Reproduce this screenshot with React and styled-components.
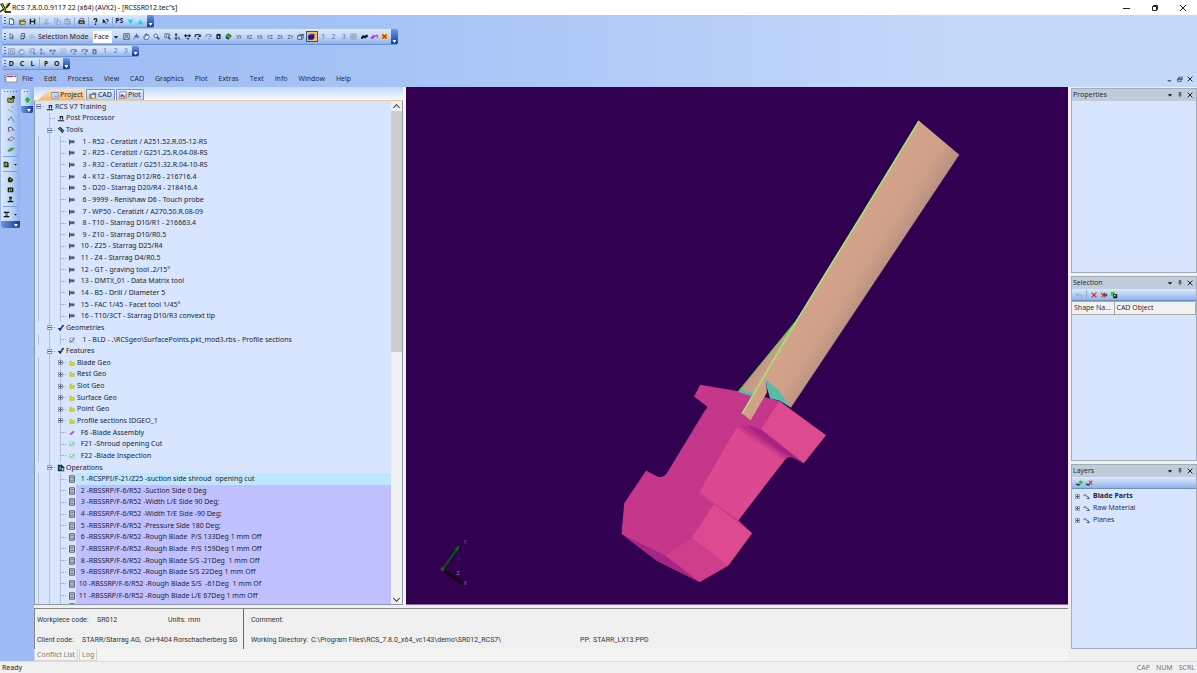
import React, { useState } from "react";
import styled, { createGlobalStyle, css } from "styled-components";

const GlobalStyle = createGlobalStyle`
  * {
    box-sizing: border-box;
  }
  body {
    margin: 0;
    background: #f0f0f0;
    color: #1c2430;
    font-family: "Noto Sans", "Open Sans", sans-serif;
    font-size: 7px;
    line-height: 10px;
  }
  button, select {
    font: inherit;
    color: inherit;
    border: 0;
    padding: 0;
    margin: 0;
    background: none;
  }
  ul {
    list-style: none;
    margin: 0;
    padding: 0;
  }
  svg {
    display: block;
  }
`;

// small 10x10 toolbar drawings
const glyphs = {
  blank: <path d="M2 1h4l2 2v6H2zM6 1v2h2" fill="#fff" stroke="#333" />,
  open: <g><path d="M1 3h3l1 1h3v4H1z" fill="#c9b52a" stroke="#4b4308" /><path d="M3 5h7L8 9H1z" fill="#f1e16a" stroke="#4b4308" /><path d="M6 2q2-1 3 1" stroke="#222" fill="none" /></g>,
  save: <g><path d="M1 1h8v8H1z" fill="#18202c" /><path d="M3 1h4v3H3zM3 6h4v3H3z" fill="#dbe6f5" /></g>,
  cut: <g stroke="#7d96bd" fill="none"><path d="M3 1l3 6M7 1L4 7" /><circle cx="3" cy="8" r="1" /><circle cx="7" cy="8" r="1" /></g>,
  copy: <g stroke="#7d96bd" fill="#c6d8f2"><path d="M1 1h4v5H1zM4 4h5v5H4z" /></g>,
  paste: <g stroke="#7d96bd" fill="#c6d8f2"><path d="M1 2h7v6H1zM3 1h3v2H3zM4 5h5v4H4z" /></g>,
  print: <g><path d="M3 1h5L7 4H2z" fill="#fff" stroke="#333" /><path d="M1 4h8v4H1z" fill="#555" stroke="#222" /><path d="M3 6h4" stroke="#eee" /></g>,
  help: <g><path d="M3 3q0-2 2-2t2 2q0 1-2 3" stroke="#252000" strokeWidth="2" fill="none" /><path d="M4 8h2v2H4z" fill="#252000" /><path d="M4 3q1-2 2 0" stroke="#e8d400" fill="none" /></g>,
  whats: <g><path d="M1 1v7l2-2 2 3V5z" fill="#14223c" /><path d="M6 3q0-2 2-1t-1 4M7 8v1" stroke="#1c3e83" strokeWidth="1.5" fill="none" /></g>,
  down: <path d="M1 2h8L5 9z" fill="#12dbe6" />,
  up: <path d="M1 9h8L5 2z" fill="#12dbe6" />,
  cursor: <path d="M3 1v7l2-2 1 3 1-1-1-3h2z" fill="#fff" stroke="#2a3444" />,
  cursor2: <g><path d="M3 3v6l2-2 1 2 1-3h2z" fill="#fff" stroke="#222" /><path d="M3 1h5v3" fill="none" stroke="#222" /></g>,
  cursorOff: <path d="M4 2v6l2-2h3zM1 2v6" fill="#c5d7f2" stroke="#8aa0c4" />,
  view: <g><path d="M1 1h8v8H1z" fill="#c9dcf6" stroke="#28384f" /><circle cx="5" cy="4" r="1.5" fill="none" stroke="#28384f" /><path d="M2 8l2-2M6 6l2 2" stroke="#28384f" /></g>,
  walk: <path d="M1 9l3-4 1-4 1 4 3 1M4 5l3 2M2 5l6-1" stroke="#2d4874" fill="none" />,
  hand: <path d="M2 9L1 5l2 1V2l1 2 1-3 1 3 1-2 1 2 1 1-2 4z" fill="#e9f1fc" stroke="#35445b" />,
  zoom: <g><circle cx="4" cy="4" r="2.5" fill="#eaf3ff" stroke="#293d60" /><path d="M6 6l3 3" stroke="#293d60" strokeWidth="2" /></g>,
  zoomBox: <g><path d="M1 1h7v4M1 1v6h3" fill="none" stroke="#293d60" strokeWidth=".7" /><circle cx="5" cy="4" r="2" fill="#eaf3ff" stroke="#293d60" /><path d="M6 6l3 3" stroke="#293d60" strokeWidth="2" /></g>,
  moveV: <g stroke="#141c28" fill="none"><path d="M3 1v8M1 3l2-2 2 2M1 7l2 2 2-2" strokeWidth="1.3" /><path d="M6 8l3 1M6 6h2" /></g>,
  moveH: <path d="M1 4h8M3 2L1 4l2 2M7 2l2 2-2 2M4 7l3 2" stroke="#141c28" fill="none" strokeWidth="1.5" />,
  orbit: <g><path d="M2 6q-2-4 3-4t3 3M6 5h3V2" stroke="#141c28" fill="none" strokeWidth="1.5" /><path d="M5 7l2 2" stroke="#141c28" strokeWidth="1.5" /></g>,
  orbitOff: <path d="M2 6q-2-4 3-4t3 3M6 5h3V2M5 7l2 2" stroke="#6e8bb8" fill="none" strokeWidth="1.5" />,
  cyl: <g><path d="M2 2q3-2 6 0v6q-3 2-6 0z" fill="#15191f" /><path d="M4 4h2v3H4z" fill="#cfdcec" /></g>,
  green: <g><path d="M2 3l3-2 4 3-3 4-4-1z" fill="#2cab3c" stroke="#0f4b18" /><path d="M1 6l4 3" stroke="#222" strokeWidth="1.5" /></g>,
  box: <g fill="#dbe8fa" stroke="#27364c"><path d="M1 4h6v5H1z" /><path d="M1 4l2-2h6L7 4zM7 4l2-2v5L7 9z" /></g>,
  solid: <g><path d="M1 4h6v5H1z" fill="#0717e8" stroke="#050a50" /><path d="M1 4l2-2h6L7 4z" fill="#3aa13c" stroke="#050a50" /><path d="M7 4l2-2v5L7 9z" fill="#050a50" /></g>,
  grid: <path d="M1 1h8v8H1zM1 4h8M1 6h8M4 1v8M6 1v8" fill="none" stroke="#8b9dba" />,
  wave: <path d="M0 8l3-4 2 1 4-2M1 8l3-2 2 1 4-3" stroke="#101216" strokeWidth="1.7" fill="none" />,
  wavePink: <path d="M0 8l3-4 2 1 3-2 2 4M1 8l3-2" stroke="#d321d0" strokeWidth="1.7" fill="none" />,
  redX: <g><path d="M0 1h10v8H0z" fill="#f3d341" /><path d="M2 2l6 6M8 2L2 8" stroke="#e31b12" strokeWidth="2" /></g>,
  pts: <g><path d="M2 6l5 3" stroke="#8b9dba" /><path d="M1 5h2v2H1z" fill="#e2bc2c" /><path d="M6 2h1v1H6z" fill="#1976e4" /></g>,
  line: <g><path d="M2 6l3-4 4 7" fill="none" stroke="#5c6f8f" /><path d="M1 5h2v2H1z" fill="#2ca63a" /></g>,
  lineRed: <g><path d="M2 7V3h4l3 4" fill="none" stroke="#2e3d57" /><path d="M1 7h3v1H1z" fill="#d92929" /><path d="M6 5h2v2H6z" fill="#37a643" /></g>,
  ringRed: <g><path d="M2 5l4-3 3 2-4 4z" fill="none" stroke="#7a5f93" /><path d="M1 5h2v2H1z" fill="#e0242f" /></g>,
  leaf: <path d="M1 8l3-4h5L6 7z" fill="#25b53a" stroke="#146b20" strokeWidth=".6" />,
  block: <g><path d="M1 1h5l2 2v6H1z" fill="#13171d" /><path d="M2 3h2v5H2z" fill="#47b53f" /><path d="M4 2h2v5H4z" fill="#b8a72c" /></g>,
  imp: <g><path d="M1 4h7v5H1z" fill="#b9b13a" stroke="#1c2415" /><path d="M4 6l5-4M6 2h3v3" stroke="#12180f" fill="none" strokeWidth="1.3" /></g>,
  star: <g><path d="M4 1l2 2 3 2-2 4H2L1 4z" fill="#1d2713" /><path d="M4 4h2v2H4z" fill="#95bb45" /></g>,
  cube: <g><path d="M1 2h8v7H1z" fill="#161b12" /><path d="M3 4h2v4H3z" fill="#7fc04f" /><path d="M6 4h1v3H6z" fill="#ddd" /></g>,
  press: <g><path d="M3 1h4v3H3zM1 7h8v2H1z" fill="#101418" /><path d="M3 4h4v3H3z" fill="#3d8a55" /></g>,
  press2: <g><path d="M1 1h8v2H1zM1 7h8v2H1z" fill="#101418" /><path d="M3 3h4v4H3z" fill="#7a8d25" /></g>,
  plus: <g><path d="M5 1l4 4-4 4-4-4z" fill="#1cb92a" /><path d="M3 8h4v1H3z" fill="#0c5e15" /></g>,
  doc: <g><path d="M1 2h8v7H1z" fill="#fff" stroke="#5a7fb9" /><path d="M1 2h8M3 5h5M3 7h5" stroke="#5a7fb9" /></g>,
  cad: <g><path d="M1 4h7v5H1z" fill="#d7b645" stroke="#6b5b28" /><path d="M4 2h5v3H4z" fill="#5f80b5" /><path d="M4 5h3v4H4z" fill="#f4f7fb" /></g>,
  plot: <g><path d="M1 1h8v8H1z" fill="#f4f7ff" stroke="#4a75c4" /><path d="M2 7l2-2 3 3" stroke="#e02a1b" strokeWidth="2" fill="none" /><path d="M5 6l4-2v4z" fill="#efb51e" /></g>,
  machine: <path d="M4 7V3h3v4M1 8.500h8" stroke="#15191f" strokeWidth="1.3" fill="#c4cee0" />,
  bolt: <g><path d="M1 3l3-2 5 5-2 3z" fill="#10151c" /><path d="M2 3l2-1 2 3-2 1z" fill="#2f93b7" /><path d="M6 6l2 1" stroke="#fff" /></g>,
  tool: <g><path d="M1 1v8" stroke="#262c36" strokeWidth="1.6" /><path d="M2 3h7v4H2z" fill="#6d7787" /><path d="M2 3h7M2 5h7" stroke="#262c36" strokeWidth=".9" /></g>,
  check: <g><path d="M1 5l3 4 5-7-2-1-3 4z" fill="#12223e" /><path d="M4 6l3-4 1 1-3 4z" fill="#3b77c8" /></g>,
  geo: <g><path d="M1 2h7v7H1z" fill="#e5edf8" stroke="#5a6478" strokeWidth=".7" /><path d="M2 5l2 3 5-7" stroke="#1a1f29" fill="none" /></g>,
  folder: <path d="M1 2h3l1 2h4v5H1z" fill="#d8d619" stroke="#a3a530" strokeWidth=".6" />,
  feat: <path d="M1 7l3 1 5-5-3-1z" fill="#f02ae2" stroke="#8a4c9a" strokeWidth=".6" />,
  featOk: <g><path d="M1 2h7v6H1z" fill="#e8f4ea" stroke="#8ba29b" strokeWidth=".8" /><path d="M2 5l2 2 5-5" stroke="#1fc23c" strokeWidth="1.3" fill="none" /></g>,
  ops: <g><path d="M1 1h5l3 3v5H1z" fill="#1a2f42" /><path d="M3 3h2v4H3z" fill="#45b9c4" /><path d="M6 5h2v3H6z" fill="#dce" /></g>,
  op: <g><path d="M2 1h6v8H2z" fill="#e6ebf4" stroke="#2d323b" /><path d="M3 3h4M3 5h4M3 7h4" stroke="#2d323b" strokeWidth=".8" /></g>,
  undo: <path d="M2 3v3h3M2 6q3-4 6-1v3" stroke="#8aa2c8" fill="none" />,
  del: <path d="M2 2l6 6M8 2L2 8" stroke="#ee2222" strokeWidth="1.6" />,
  delAll: <g><path d="M1 2l5 6M6 2L2 8" stroke="#e03a1e" strokeWidth="1.3" /><path d="M4 4h5M5 6h4" stroke="#25331c" strokeWidth="1.3" /></g>,
  addSel: <g><path d="M1 1h5v5H1z" fill="#2fd334" /><path d="M4 4h5v5H4z" fill="#111" /><path d="M5 5h2v2H5z" fill="#dfe9df" /></g>,
  layerAdd: <g><path d="M0 6h6v2H3z" fill="#26313f" /><path d="M5 4h5M7 2v5" stroke="#29c033" strokeWidth="2" /></g>,
  layerDel: <g><path d="M0 6h6v2H3z" fill="#26313f" /><path d="M5 2l4 5M9 2L5 7" stroke="#e33a2e" strokeWidth="1.6" /></g>,
  layer: <g><path d="M1 3h4l4 4H5z" fill="#fff" stroke="#6a7488" strokeWidth=".6" /><path d="M1 3h4M5 5h2l2 3H5" stroke="#2b3240" fill="none" /></g>,
  caret: <path d="M2 4h6L5 7z" fill="#111" />,
  pin: <path d="M3 1h4M4 1v4M6 1v4M2 5h6M5 5v4" stroke="#222" fill="none" />,
  close: <path d="M1 1l8 8M9 1L1 9" stroke="#15181d" strokeWidth="1.5" />,
  min: <path d="M1 8h6" stroke="#15181d" strokeWidth="1.5" />,
  restore: <path d="M1 5h6v4H1zM3 5V2h6v4H7M1 5h6" stroke="#15181d" fill="none" />,
};

const smallGlyphs = ["tool", "feat", "featOk", "geo", "folder"];

const Glyph = ({ name, size = 8 }) => (
  <svg width={size} height={size} viewBox="0 0 10 10" aria-hidden="true">
    {glyphs[name]}
  </svg>
);

const App = () => {
  const [tab, setTab] = useState("Project");
  const [mode, setMode] = useState("Face");

  return (
    <>
      <GlobalStyle />
      <Shell>
        <TitleBar>
          <Logo />
          <Title>RCS 7.8.0.0.9117 22 (x64) (AVX2) - [RCSSR012.tec"s]</Title>
          <WindowButton aria-label="Minimize"><svg width="8" height="8"><path d="M0 4.500h7" stroke="#222" /></svg></WindowButton>
          <WindowButton aria-label="Restore"><svg width="8" height="8"><path d="M1.500 2.500h4v4h-4zM2.500 2.500v-1h4v4h-1" fill="none" stroke="#222" /></svg></WindowButton>
          <WindowButton aria-label="Close"><svg width="8" height="8"><path d="M1 1l6 6M7 1L1 7" stroke="#222" /></svg></WindowButton>
        </TitleBar>

        <Bars>
          <Toolbar $width={154} $height={13}>
            <Grip />
            <Tools items={["blank", "open", "save", "|", "cut", "copy", "paste", "|", "print", "|", "help", "whats", "|", "#PS", "down", "up"]} />
            <Overflow />
          </Toolbar>
          <Toolbar $width={398} $height={16}>
            <Grip />
            <Fixed $width={32}><Tools items={["cursor", "cursor2", "cursorOff"]} /></Fixed>
            <ModeLabel htmlFor="mode">Selection Mode</ModeLabel>
            <ModeBox>
              <ModeSelect id="mode" value={mode} onChange={(e) => setMode(e.target.value)}>
                <option>Face</option>
                <option>Edge</option>
              </ModeSelect>
              <Glyph name="caret" />
            </ModeBox>
            <Tools items={["view", "walk", "hand", "zoom", "zoomBox", "moveV", "moveH", "orbit", "orbitOff", "cyl", "green", "~XY", "~XZ", "~YX", "~YZ", "~ZX", "~ZY", "box", "*solid", "-1", "-2", "-3", "grid", "wave", "wavePink", "redX"]} />
            <Overflow />
          </Toolbar>
          <Toolbar $width={139} $height={11} $muted>
            <Grip />
            <Tools items={["view", "hand", "zoomBox", "moveV", "moveH", "grid", "orbit", "orbit", "cyl", "-1", "-2", "-3"]} />
            <Overflow />
          </Toolbar>
          <Toolbar $width={70} $height={12}>
            <Grip />
            <Tools items={["#D", "#C", "#L", "|", "#P", "#O"]} />
            <Overflow />
          </Toolbar>
          <MenuBar>
            <MenuIcon width="14" height="10">
              <path d="M0.500 1v8" stroke="#5f86cf" strokeDasharray="1 1" />
              <path d="M2 1h11v7H2z" fill="#fff" stroke="#8c8fa0" />
              <path d="M3 2h6v1H3z" fill="#d7263a" />
              <path d="M10 2h2v1h-2z" fill="#4a62b8" />
            </MenuIcon>
            {["File", "Edit", "Process", "View", "CAD", "Graphics", "Plot", "Extras", "Text", "Info", "Window", "Help"].map((m) => (
              <MenuItem key={m}>{m}</MenuItem>
            ))}
            <MenuEnd>
              <IconButton aria-label="Minimize document"><Glyph name="min" size={6} /></IconButton>
              <IconButton aria-label="Restore document"><Glyph name="restore" size={6} /></IconButton>
              <IconButton aria-label="Close document"><Glyph name="close" size={6} /></IconButton>
            </MenuEnd>
          </MenuBar>
        </Bars>

        <Body>
          <SideBars>
            <SideBar $width={19}>
              <TopGrip />
              <SideTool aria-label="Import"><Glyph name="imp" /></SideTool>
              <SideTool aria-label="Points"><Glyph name="pts" /></SideTool>
              <SideTool aria-label="Line"><Glyph name="line" /></SideTool>
              <SideTool aria-label="Polyline"><Glyph name="lineRed" /></SideTool>
              <SideTool aria-label="Contour"><Glyph name="ringRed" /></SideTool>
              <SideTool aria-label="Surface"><Glyph name="leaf" /></SideTool>
              <SideRule />
              <SideTool aria-label="Block"><Glyph name="block" size={7} /><Glyph name="caret" size={5} /></SideTool>
              <SideRule />
              <SideTool aria-label="Burst"><Glyph name="star" size={7} /></SideTool>
              <SideTool aria-label="Cube"><Glyph name="cube" size={7} /></SideTool>
              <SideTool aria-label="Press"><Glyph name="press" size={7} /></SideTool>
              <SideRule />
              <SideTool aria-label="Machine"><Glyph name="press2" size={7} /><Glyph name="caret" size={5} /></SideTool>
              <SideOverflow />
            </SideBar>
            <SideBar $width={12}>
              <TopGrip />
              <SideTool aria-label="Add"><Glyph name="plus" size={7} /></SideTool>
              <SideOverflow />
            </SideBar>
          </SideBars>

          <Center>
            <Work>
              <Project>
                <Tabs>
                  {[["Project", "doc"], ["CAD", "cad"], ["Plot", "plot"]].map(([label, icon]) => (
                    <Tab key={label} $active={tab === label} onClick={() => setTab(label)}>
                      <Glyph name={icon} />
                      {label}
                    </Tab>
                  ))}
                </Tabs>
                <TreeBox>
                  <Tree />
                  <ScrollBar>
                    <Arrow $up />
                    <Thumb />
                    <Arrow />
                  </ScrollBar>
                </TreeBox>
              </Project>
              <Viewport><Model /></Viewport>
            </Work>
            <InfoPane>
              <InfoBlock $columns="45px 15px 71px 20px 1fr" $width={209}>
                <span>Workpiece code:</span><i /><span>SR012</span><span>Units:</span><span>mm</span>
                <span>Client code:</span><Span4>STARR/Starrag AG,  CH-9404 Rorschacherberg SG</Span4>
              </InfoBlock>
              <InfoBlock $columns="60px 269px 13px 1fr">
                <span>Comment:</span><i /><i /><i />
                <span>Working Directory:</span><span>C:\Program Files\RCS_7.8.0_x64_vc143\demo\SR012_RCS7\</span><span>PP:</span><span>STARR_LX13.PPD</span>
              </InfoBlock>
            </InfoPane>
            <BottomTabs>
              <BottomTab>Conflict List</BottomTab>
              <BottomTab>Log</BottomTab>
            </BottomTabs>
          </Center>

          <Dock>
            <Panel>
              <PanelHead title="Properties" />
            </Panel>
            <Panel>
              <PanelHead title="Selection" />
              <PanelTools>
                <Glyph name="undo" /><Rule /><Glyph name="del" /><Glyph name="delAll" /><Glyph name="addSel" />
              </PanelTools>
              <ObjectTable>
                <thead>
                  <tr><th>Shape Na...</th><th>CAD Object</th></tr>
                </thead>
              </ObjectTable>
            </Panel>
            <Panel>
              <PanelHead title="Layers" />
              <PanelTools>
                <Glyph name="layerAdd" /><Glyph name="layerDel" />
              </PanelTools>
              <LayerList>
                {["Blade Parts", "Raw Material", "Planes"].map((name, i) => (
                  <LayerRow key={name} $bold={i === 0}>
                    <Expander />
                    <Glyph name="layer" size={7} />
                    {name}
                  </LayerRow>
                ))}
              </LayerList>
            </Panel>
          </Dock>
        </Body>

        <StatusBar>
          <Ready>Ready</Ready>
          <StatusKey>CAP</StatusKey>
          <StatusKey>NUM</StatusKey>
          <StatusKey>SCRL</StatusKey>
        </StatusBar>
      </Shell>
    </>
  );
};

export default App;

// "|" is a separator, "#" bold letters, "~" axis names, "-" digits, "*" a pressed button
const Tools = ({ items }) =>
  items.map((item, i) => {
    const rest = item.slice(1);
    if (item === "|") return <Rule key={i} />;
    if (item[0] === "#") return <ToolButton key={i} $bold>{rest}</ToolButton>;
    if (item[0] === "~") return <ToolButton key={i} $tiny>{rest}</ToolButton>;
    if (item[0] === "-") return <ToolButton key={i} $digit>{rest}</ToolButton>;
    if (item[0] === "*") return <ToolButton key={i} $pressed aria-label={rest}><Glyph name={rest} size={7} /></ToolButton>;
    return <ToolButton key={i} aria-label={item}><Glyph name={item} size={7} /></ToolButton>;
  });

const Logo = () => (
  <svg width="11" height="12" viewBox="0 0 11 12" aria-hidden="true">
    <path d="M0 2l3-1 3 6v4H5L3 7z" fill="#2a3016" />
    <path d="M2 2l3 7M7 1l3 2-4 4z" stroke="#b5c032" fill="#c6cb3e" />
    <path d="M10 1L6 6M0 10l4-3" stroke="#171a12" strokeWidth="1.500" />
    <path d="M6 10h5" stroke="#3c4a1b" strokeWidth="2" />
  </svg>
);

const PanelHead = ({ title }) => (
  <Head>
    <HeadTitle>{title}</HeadTitle>
    <IconButton aria-label={`${title} menu`}><Glyph name="caret" /></IconButton>
    <IconButton aria-label={`Pin ${title}`}><Glyph name="pin" size={6} /></IconButton>
    <IconButton aria-label={`Close ${title}`}><Glyph name="close" size={6} /></IconButton>
  </Head>
);

const treeRows = [
  [0, "machine", "RCS V7 Training", "-"],
  [1, "machine", "Post Processor"],
  [1, "bolt", "Tools", "-"],
  [2, "tool", "   1 - R52 - Ceratizit / A251.52.R.05-12-RS"],
  [2, "tool", "   2 - R25 - Ceratizit / G251.25.R.04-08-RS"],
  [2, "tool", "   3 - R32 - Ceratizit / G251.32.R.04-10-RS"],
  [2, "tool", "   4 - K12 - Starrag D12/R6 - 216716.4"],
  [2, "tool", "   5 - D20 - Starrag D20/R4 - 218416.4"],
  [2, "tool", "   6 - 9999 - Renishaw D6 - Touch probe"],
  [2, "tool", "   7 - WP50 - Ceratizit / A270.50.R.08-09"],
  [2, "tool", "   8 - T10 - Starrag D10/R1 - 216663.4"],
  [2, "tool", "   9 - Z10 - Starrag D10/R0.5"],
  [2, "tool", "  10 - Z25 - Starrag D25/R4"],
  [2, "tool", "  11 - Z4 - Starrag D4/R0.5"],
  [2, "tool", "  12 - GT - graving tool .2/15°"],
  [2, "tool", "  13 - DMTX_01 - Data Matrix tool"],
  [2, "tool", "  14 - B5 - Drill / Diameter 5"],
  [2, "tool", "  15 - FAC 1/45 - Facet tool 1/45°"],
  [2, "tool", "  16 - T10/3CT - Starrag D10/R3 convext tip"],
  [1, "check", "Geometries", "-"],
  [2, "geo", "   1 - BLD - .\\RCSgeo\\SurfacePoints.pkt_mod3.rbs - Profile sections"],
  [1, "check", "Features", "-"],
  [2, "folder", "Blade Geo", "+"],
  [2, "folder", "Rest Geo", "+"],
  [2, "folder", "Slot Geo", "+"],
  [2, "folder", "Surface Geo", "+"],
  [2, "folder", "Point Geo", "+"],
  [2, "folder", "Profile sections IDGEO_1", "+"],
  [2, "feat", "  F6 -Blade Assembly"],
  [2, "featOk", "  F21 -Shroud opening Cut"],
  [2, "featOk", "  F22 -Blade Inspection"],
  [1, "ops", "Operations", "-"],
  [2, "op", "  1 -RCSPPI/F-21/Z25 -suction side shroud  opening cut", "", "#bee6ff"],
  [2, "op", "  2 -RBSSRP/F-6/R52 -Suction Side 0 Deg", "", "#c1c0fe"],
  [2, "op", "  3 -RBSSRP/F-6/R52 -Width L/E Side 90 Deg;", "", "#c1c0fe"],
  [2, "op", "  4 -RBSSRP/F-6/R52 -Width T/E Side -90 Deg;", "", "#c1c0fe"],
  [2, "op", "  5 -RBSSRP/F-6/R52 -Pressure Side 180 Deg;", "", "#c1c0fe"],
  [2, "op", "  6 -RBSSRP/F-6/R52 -Rough Blade  P/S 133Deg 1 mm Off", "", "#c1c0fe"],
  [2, "op", "  7 -RBSSRP/F-6/R52 -Rough Blade  P/S 159Deg 1 mm Off", "", "#c1c0fe"],
  [2, "op", "  8 -RBSSRP/F-6/R52 -Rough Blade S/S -21Deg  1 mm Off", "", "#c1c0fe"],
  [2, "op", "  9 -RBSSRP/F-6/R52 -Rough Blade S/S 22Deg 1 mm Off", "", "#c1c0fe"],
  [2, "op", " 10 -RBSSRP/F-6/R52 -Rough Blade S/S  -61Deg  1 mm Of", "", "#c1c0fe"],
  [2, "op", " 11 -RBSSRP/F-6/R52 -Rough Blade L/E 67Deg 1 mm Off", "", "#c1c0fe"],
  [2, "op", " 12 -RBSSRP/F-6/R52 -Rough Blade T/E -151Deg 1 mm Off", "", "#c1c0fe"],
];

const Tree = () => (
  <TreeList>
    {treeRows.map(([level, icon, text, state, fill], i) => (
      <TreeRow key={i}>
        {level > 0 && <Guide $blank={level === 1} />}
        {level > 1 && <Guide />}
        <Branch $level={level}>{state && <Expander $open={state === "-"} />}</Branch>
        <IconCell><Glyph name={icon} size={smallGlyphs.includes(icon) ? 6 : 8} /></IconCell>
        <RowText $fill={fill}>{text}</RowText>
      </TreeRow>
    ))}
  </TreeList>
);

const Model = () => (
  <svg width="100%" height="100%" viewBox="406 87 662 518" aria-label="Blade model">
    <defs>
      <linearGradient id="skin" gradientUnits="userSpaceOnUse" x1="850" y1="240" x2="892" y2="267">
        <stop offset="0" stopColor="#d2a389" />
        <stop offset=".55" stopColor="#cfa088" />
        <stop offset="1" stopColor="#b28c82" />
      </linearGradient>
      <linearGradient id="flap" gradientUnits="userSpaceOnUse" x1="755" y1="355" x2="775" y2="370">
        <stop offset="0" stopColor="#bc9284" />
        <stop offset="1" stopColor="#d0a189" />
      </linearGradient>
      <linearGradient id="neck" gradientUnits="userSpaceOnUse" x1="768" y1="443" x2="764" y2="449">
        <stop offset="0" stopColor="#b62a86" />
        <stop offset="1" stopColor="#dc4990" />
      </linearGradient>
    </defs>
    <path d="M700 385.300l40 6.700 13 2.500 26 7 47 34.500-22 27.700-12.300-6q-4-1-7 3.500L738.300 521l13.700 13-24 32.700-28.700 16.300-42.600-21.300-35.400-27 2.700-30.700 22-32.700 11 6q5 2 9.700-3.300L705 411q3-3 2-4l-13-10z" fill="#c5378a" />
    <path d="M779.300 401.700L826 436l-22 27.700L761.300 430z" fill="#dd4a8f" />
    <path d="M743.300 425.500q-5 1-8.500 6L699 493.500l15 11.200 24.300 16.300L784 461l5-4z" fill="url(#neck)" />
    <path d="M745 425l16 5 42.500 33.500-11-5.500q-10-2-47-33z" fill="#a82484" />
    <path d="M714 504.700L752 534l-24 32.700-36.300-27.700z" fill="#dd4a8f" />
    <path d="M699 492l15 11.500 25 17-2 1-23-16.500-15-9z" fill="#ca3f8c" />
    <path d="M691.700 539l36.300 27.700-28.700 16.300-33.600-26.300z" fill="#cf3e8b" />
    <path d="M621.300 534.700l44.400 22 33.600 26.300-42.600-21.300z" fill="#a92585" />
    <path d="M798.300 318.300L738.300 392l17 3z" fill="url(#flap)" />
    <path d="M740 390.500l14 3-3 3-12.500-4z" fill="#57bda9" />
    <path d="M919.300 120.700l40.400 34.300L791 408.300 766 381l1 12-16.300 28-8.700-7 56.300-95.700 28.400-46.600z" fill="url(#skin)" />
    <path d="M766 380.700l13 10.500 12 17-11.700-7-9-2-3.500-11z" fill="#57bda9" />
    <path d="M798 319l-59.700 73" stroke="#2ed12f" strokeWidth="1" />
    <path d="M919.300 121l-57.500 94.500-35 56.500-28.500 46.500L742 414.500" fill="none" stroke="#9bec78" strokeWidth="1.500" />
    <path d="M442 570l16-22" stroke="#07540f" strokeWidth="2" />
    <path d="M459 546l-2 6-3-2z" fill="#0a650f" />
    <path d="M442 570l19 14" stroke="#120c14" strokeWidth="3" />
    <path d="M457 585l5-6 1 6z" fill="#120c14" />
    <circle cx="442" cy="570" r="2" fill="#464048" />
    <g fill="#9b72a9" fontSize="5" fontFamily="Liberation Sans, sans-serif">
      <text x="463" y="545">Y</text>
      <text x="456" y="576">Z</text>
      <text x="463" y="586">X</text>
    </g>
  </svg>
);

const Shell = styled.div`
  display: flex;
  flex-direction: column;
  height: 100vh;
  overflow: hidden;
`;

const TitleBar = styled.header`
  display: flex;
  align-items: center;
  flex: 0 0 15px;
  background: #fff;
  color: #111;
`;

const Title = styled.div`
  flex: 1;
  padding-left: 1px;
  white-space: nowrap;
`;

const WindowButton = styled.button`
  display: flex;
  justify-content: center;
  width: 28px;
`;

const Bars = styled.div`
  display: flex;
  flex-direction: column;
  flex: 0 0 72px;
  gap: 1px;
  padding-left: 2px;
  background: linear-gradient(90deg, #9ebbf5, #a6c3f6 33%, #c4d8f9 80%);
`;

const Toolbar = styled.div`
  display: flex;
  align-items: center;
  flex: 0 0 ${({ $height }) => $height}px;
  width: ${({ $width }) => $width - 2}px;
  padding-left: 2px;
  border-radius: 2px;
  background: linear-gradient(#dde9fd, #c2d7f8 50%, #8db1ec);
  border-bottom: 1px solid #6d93d8;
  overflow: hidden;
  ${({ $muted }) => $muted && css`
    button svg {
      opacity: 0.5;
    }
  `}
`;

const Grip = styled.span`
  width: 2px;
  height: 8px;
  background: repeating-linear-gradient(#4069b5 0 1px, transparent 1px 3px);
`;

const Overflow = styled.span`
  display: flex;
  align-items: flex-end;
  justify-content: center;
  align-self: stretch;
  width: 7px;
  margin-left: 1px;
  padding-bottom: 1px;
  background: linear-gradient(#6d98e4, #123c92);
  &::after {
    content: "";
    width: 4px;
    height: 3px;
    background: #fff;
    clip-path: polygon(0 0, 100% 0, 50% 100%);
  }
`;

const ToolButton = styled.button`
  display: flex;
  align-items: center;
  justify-content: center;
  flex: 1 1 0;
  min-width: 0;
  height: 11px;
  ${({ $bold }) => $bold && css`
    font-weight: 700;
    color: #15202f;
  `}
  ${({ $tiny }) => $tiny && css`
    font-size: 5px;
    color: #33425c;
  `}
  ${({ $digit }) => $digit && css`
    color: #5478ad;
  `}
  ${({ $pressed }) => $pressed && css`
    background: #f9b66d;
    border: 1px solid #3a4f86;
  `}
`;

const Rule = styled.span`
  width: 1px;
  height: 9px;
  margin: 0 1px;
  background: #8aa9dc;
`;

const Fixed = styled.div`
  display: flex;
  flex: 0 0 ${({ $width }) => $width}px;
`;

const ModeLabel = styled.label`
  flex: 0 0 55px;
  white-space: nowrap;
`;

const ModeBox = styled.div`
  display: flex;
  align-items: center;
  flex: 0 0 27px;
  height: 12px;
  margin-right: 1px;
  background: linear-gradient(90deg, #fff 19px, transparent 19px);
`;

const ModeSelect = styled.select`
  appearance: none;
  width: 19px;
  padding-left: 1px;
  outline: 0;
`;

const MenuBar = styled.nav`
  display: flex;
  align-items: center;
  flex: 1;
  padding-left: 2px;
  font-family: "Open Sans", sans-serif;
`;

const MenuIcon = styled.svg`
  margin-right: 4px;
`;

const MenuItem = styled.button`
  margin-right: 11px;
`;

const MenuEnd = styled.div`
  display: flex;
  margin-left: auto;
  padding-right: 2px;
`;

const IconButton = styled.button`
  display: flex;
  align-items: center;
  justify-content: center;
  width: 10px;
  height: 10px;
`;

const Body = styled.div`
  display: flex;
  flex: 1;
  min-height: 0;
`;

const SideBars = styled.aside`
  display: flex;
  align-items: flex-start;
  gap: 1px;
  flex: 0 0 34px;
  padding: 2px 0 0 1px;
  background: #9ebbf5;
`;

const SideBar = styled.div`
  display: flex;
  flex-direction: column;
  align-items: stretch;
  width: ${({ $width }) => $width}px;
  border-radius: 2px;
  overflow: hidden;
  background: linear-gradient(90deg, #dde9fd, #c2d7f8 50%, #8db1ec);
`;

const TopGrip = styled.span`
  height: 1px;
  margin: 2px 3px;
  background: repeating-linear-gradient(90deg, #4069b5 0 1px, transparent 1px 3px);
`;

const SideTool = styled.button`
  display: flex;
  align-items: center;
  justify-content: space-around;
  height: 10px;
`;

const SideRule = styled.span`
  height: 1px;
  margin: 2px;
  background: #7f9fd8;
`;

const SideOverflow = styled.span`
  height: 7px;
  margin-top: 2px;
  background: linear-gradient(90deg, #6d98e4, #123c92);
  &::after {
    content: "";
    display: block;
    width: 4px;
    height: 3px;
    margin: 3px 2px 0 auto;
    background: #fff;
    clip-path: polygon(0 0, 100% 0, 50% 100%);
  }
`;

const Center = styled.main`
  display: flex;
  flex-direction: column;
  flex: 1;
  min-width: 0;
`;

const Work = styled.div`
  display: flex;
  flex: 1;
  min-height: 0;
  gap: 3px;
  background: #f4f4f4;
`;

const Project = styled.section`
  display: flex;
  flex-direction: column;
  flex: 0 0 369px;
`;

const Tabs = styled.div`
  display: flex;
  align-items: flex-end;
  flex: 0 0 14px;
  gap: 1px;
  padding-left: 4px;
  background: linear-gradient(#c4d9fb, #f6faff);
  border-bottom: 1px solid #e8c9a2;
`;

const Tab = styled.button`
  display: flex;
  align-items: center;
  gap: 1px;
  height: 11px;
  padding: 0 2px;
  border: 1px solid #6d94d8;
  border-bottom: 0;
  border-radius: 1px 2px 0 0;
  background: linear-gradient(#e6effe, #b3cdf8);
  ${({ $active }) => $active && css`
    padding-left: 13px;
    border: 0;
    background: linear-gradient(#fde3bd, #f8b873);
    clip-path: polygon(12px 0, 100% 0, 100% 100%, 0 100%);
  `}
`;

const TreeBox = styled.div`
  display: flex;
  flex: 1;
  min-height: 0;
  overflow: hidden;
  background: #d7e6fe;
  border: solid #8d97a8;
  border-width: 0 1px 1px;
`;

const TreeList = styled.ul`
  display: grid;
  grid-auto-rows: 1fr;
  flex: 1;
  height: calc(100% + 9px);
`;

const TreeRow = styled.li`
  display: flex;
  align-items: center;
  min-height: 0;
  white-space: pre;
`;

const Guide = styled.span`
  align-self: stretch;
  flex: 0 0 11px;
  background: ${({ $blank }) => ($blank ? "none" : "linear-gradient(#b4c1d8, #b4c1d8) 3px 0 / 1px 100% no-repeat")};
`;

const Branch = styled.span`
  display: flex;
  align-items: center;
  align-self: stretch;
  flex: 0 0 10px;
  padding-left: 1px;
  background:
    repeating-linear-gradient(90deg, #93a2bd 0 1px, transparent 1px 2px) 4px 50% / 6px 1px no-repeat,
    linear-gradient(#b4c1d8, #b4c1d8) 3px 0 / ${({ $level }) => ($level ? 1 : 0)}px 100% no-repeat;
`;

const Expander = styled.span`
  flex: 0 0 5px;
  height: 5px;
  border: 1px solid #94a3bb;
  background: linear-gradient(#4a566b, #4a566b) 50% 50% / 3px 1px no-repeat #e6eefb;
  ${({ $open }) => !$open && css`
    background:
      linear-gradient(#4a566b, #4a566b) 50% 50% / 1px 3px no-repeat,
      linear-gradient(#4a566b, #4a566b) 50% 50% / 3px 1px no-repeat #e6eefb;
  `}
`;

const IconCell = styled.span`
  display: flex;
  justify-content: center;
  flex: 0 0 9px;
`;

const RowText = styled.span`
  display: flex;
  align-items: center;
  align-self: stretch;
  flex: 1;
  padding-left: 1px;
  background: ${({ $fill }) => $fill || "none"};
`;

const ScrollBar = styled.div`
  display: flex;
  flex-direction: column;
  flex: 0 0 11px;
  background: #f0f0f0;
`;

const Arrow = styled.span`
  flex: 0 0 10px;
  &::after {
    content: "";
    display: block;
    width: 4px;
    height: 4px;
    margin: ${({ $up }) => ($up ? 4 : 2)}px auto 0;
    border: solid #444;
    border-width: ${({ $up }) => ($up ? "1px 0 0 1px" : "0 1px 1px 0")};
    transform: rotate(45deg);
  }
`;

const Thumb = styled.span`
  flex: 0 0 48%;
  margin-bottom: auto;
  background: #cdcdcd;
`;

const Viewport = styled.section`
  flex: 1;
  min-width: 0;
  background: #310050;
  border-bottom: 1px solid #8f6aa8;
`;

const InfoPane = styled.section`
  display: flex;
  flex: 0 0 41px;
  margin-top: 3px;
  border-top: 1px solid #888;
  border-left: 1px solid #888;
  background: #f0f0f0;
  color: #333;
  font-family: Roboto, "Liberation Sans", sans-serif;
`;

const InfoBlock = styled.div`
  display: grid;
  grid-template-columns: ${({ $columns }) => $columns};
  grid-template-rows: 22px 18px;
  align-items: center;
  flex: ${({ $width }) => ($width ? `0 0 ${$width}px` : "1")};
  padding-left: ${({ $width }) => ($width ? 2 : 7)}px;
  border-right: ${({ $width }) => ($width ? "1px solid #666" : 0)};
  white-space: pre;
`;

const Span4 = styled.span`
  grid-column: span 4;
`;

const BottomTabs = styled.div`
  display: flex;
  gap: 1px;
  flex: 0 0 12px;
  background: #f4f4f3;
`;

const BottomTab = styled.button`
  padding: 0 2px;
  border: 1px solid #d5d5d5;
  border-top: 0;
  color: #777;
`;

const Dock = styled.aside`
  display: flex;
  flex-direction: column;
  flex: 0 0 126px;
  gap: 3px;
  margin-left: 3px;
  padding: 1px 0 12px;
  font-family: "Open Sans", sans-serif;
`;

const Panel = styled.section`
  display: flex;
  flex-direction: column;
  flex: 1 1 0;
  min-height: 0;
  background: #d7e6fe;
  border: 1px solid #a3aebd;
`;

const Head = styled.div`
  display: flex;
  align-items: center;
  flex: 0 0 12px;
  padding: 0 1px;
  background: #bfcddb;
`;

const HeadTitle = styled.h2`
  flex: 1;
  margin: 0;
  font-size: 7px;
  font-weight: 400;
`;

const PanelTools = styled.div`
  display: flex;
  align-items: center;
  gap: 2px;
  flex: 0 0 12px;
  padding-left: 3px;
  background: linear-gradient(#dde9fd, #8fb4ef);
  border-bottom: 1px solid #6d93b8;
`;

const ObjectTable = styled.table`
  table-layout: fixed;
  width: 100%;
  border-collapse: collapse;
  background: #f2f2f2;
  th {
    height: 13px;
    padding: 0 2px;
    border: 1px solid #a9a9a9;
    border-width: 1px 1px 1px 0;
    font-weight: 400;
    text-align: left;
    white-space: nowrap;
  }
  th:first-child {
    width: 42px;
  }
`;

const LayerList = styled.ul`
  padding: 1px 0 0 3px;
`;

const LayerRow = styled.li`
  display: flex;
  align-items: center;
  gap: 3px;
  height: 12px;
  font-weight: ${({ $bold }) => ($bold ? 700 : 400)};
`;

const StatusBar = styled.footer`
  display: flex;
  align-items: center;
  flex: 0 0 12px;
  border-top: 1px solid #dcdcdc;
  padding: 0 2px;
`;

const Ready = styled.span`
  flex: 1;
`;

const StatusKey = styled.span`
  padding-left: 6px;
  color: #777;
`;
